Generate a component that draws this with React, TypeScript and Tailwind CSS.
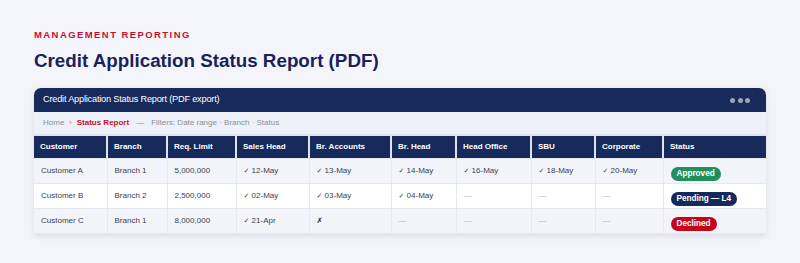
import React from 'react';

type Status = 'approved' | 'pending' | 'declined';

interface Row {
  customer: string;
  branch: string;
  limit: string;
  steps: string[];
  status: Status;
  label: string;
}

const columns = [
  { name: 'Customer', width: 'w-[73px]' },
  { name: 'Branch', width: 'w-[60px]' },
  { name: 'Req. Limit', width: 'w-[69px]' },
  { name: 'Sales Head', width: 'w-[73px]' },
  { name: 'Br. Accounts', width: 'w-[82px]' },
  { name: 'Br. Head', width: 'w-[65px]' },
  { name: 'Head Office', width: 'w-[75px]' },
  { name: 'SBU', width: 'w-[64px]' },
  { name: 'Corporate', width: 'w-[68px]' },
  { name: 'Status', width: 'w-[103px]' },
];

const rows: Row[] = [
  {
    customer: 'Customer A',
    branch: 'Branch 1',
    limit: '5,000,000',
    steps: ['12-May', '13-May', '14-May', '16-May', '18-May', '20-May'],
    status: 'approved',
    label: 'Approved',
  },
  {
    customer: 'Customer B',
    branch: 'Branch 2',
    limit: '2,500,000',
    steps: ['02-May', '03-May', '04-May', '—', '—', '—'],
    status: 'pending',
    label: 'Pending — L4',
  },
  {
    customer: 'Customer C',
    branch: 'Branch 1',
    limit: '8,000,000',
    steps: ['21-Apr', '✗', '—', '—', '—', '—'],
    status: 'declined',
    label: 'Declined',
  },
];

const badgeColor = (status: Status) => {
  switch (status) {
    case 'approved':
      return 'bg-[#1f8f5c]';
    case 'pending':
      return 'bg-[#152a5c]';
    default:
      return 'bg-[#c1061d]';
  }
};

function StatusBadge({ status, label }: { status: Status; label: string }) {
  return (
    <span
      className={`inline-flex h-[14px] items-center rounded-full px-[6px] text-[8.2px] font-bold leading-none text-white ${badgeColor(status)}`}
    >
      {label}
    </span>
  );
}

function StepCell({ value }: { value: string }) {
  if (value === '—') return <span className="text-[#b0b4c0]">—</span>;
  if (value === '✗') return <span className="font-['DejaVu_Sans',sans-serif] text-[7.5px] text-[#2a2e3a]">✗</span>;
  return (
    <span className="text-[#3b3f4c]">
      <span className="font-['DejaVu_Sans',sans-serif] text-[7px] text-[#3b3f4c]">✓</span> {value}
    </span>
  );
}

export default function App() {
  return (
    <div className="min-h-[263px] bg-[#f4f5fa] px-[34px] pt-[29px] font-['Liberation_Sans',Arial,sans-serif]">
      <div className="text-[9.5px] font-bold uppercase leading-[12px] tracking-[0.15em] text-[#c8102e]">
        Management Reporting
      </div>
      <h1 className="mt-[8px] text-[18.8px] font-bold leading-[24px] text-[#1b1f5c]">
        Credit Application Status Report (PDF)
      </h1>

      <div className="mt-[15px] overflow-hidden rounded-t-[7px] rounded-b-[4px] bg-white shadow-[0_2px_6px_rgba(20,30,70,0.12)]">
        <div className="flex h-[24px] items-center justify-between bg-[#172a5c] pl-[9px] pr-[16px]">
          <span className="text-[9.2px] tracking-[-0.2px] text-white">
            Credit Application Status Report (PDF export)
          </span>
          <div className="flex gap-[2.5px]">
            <span className="h-[5px] w-[5px] rounded-full bg-[#9aa3b8]" />
            <span className="h-[5px] w-[5px] rounded-full bg-[#9aa3b8]" />
            <span className="h-[5px] w-[5px] rounded-full bg-[#9aa3b8]" />
          </div>
        </div>

        <div className="flex h-[22px] items-center gap-[5px] bg-[#eef1f8] pl-[9px] text-[8px] text-[#8a8f9e]">
          <span>Home</span>
          <span className="text-[7px]">›</span>
          <span className="font-bold text-[#c8102e]">Status Report</span>
          <span className="px-[2px]">—</span>
          <span>Filters: Date range · Branch · Status</span>
        </div>

        <table className="w-full table-fixed border-collapse text-left">
          <thead>
            <tr>
              {columns.map((c) => (
                <th
                  key={c.name}
                  className={`${c.width} h-[23px] border-x-2 border-t-2 border-[#dfe3ee] bg-[#172a5c] px-[6px] text-[8px] font-bold text-white first:border-l-0 last:border-r-0`}
                >
                  {c.name}
                </th>
              ))}
            </tr>
          </thead>
          <tbody>
            {rows.map((r, i) => (
              <tr key={r.customer} className={i % 2 === 1 ? 'bg-white' : 'bg-[#f3f4f9]'}>
                {[r.customer, r.branch, r.limit].map((v) => (
                  <td
                    key={v}
                    className="h-[24px] border border-[#e6e8f0] px-[7px] text-[8px] text-[#3b3f4c] first:border-l-0"
                  >
                    {v}
                  </td>
                ))}
                {r.steps.map((v, j) => (
                  <td key={j} className="h-[24px] border border-[#e6e8f0] px-[7px] text-[8px]">
                    <StepCell value={v} />
                  </td>
                ))}
                <td className="h-[24px] border border-r-0 border-[#e6e8f0] px-[7px]">
                  <StatusBadge status={r.status} label={r.label} />
                </td>
              </tr>
            ))}
          </tbody>
        </table>
      </div>
    </div>
  );
}
